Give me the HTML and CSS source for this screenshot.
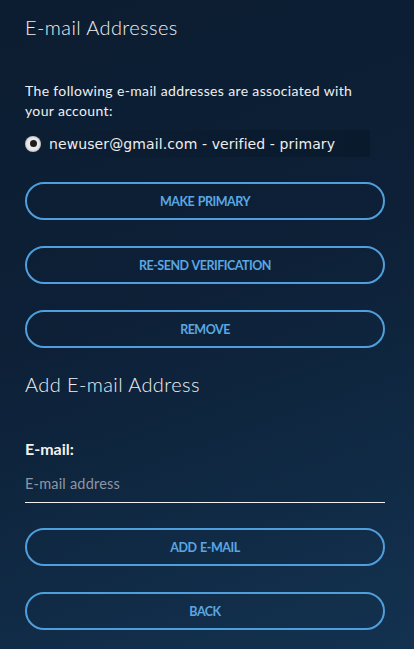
FILE: index.html
```html
<!DOCTYPE html>
<html>
<head>
<meta charset="utf-8">
<link rel="stylesheet" href="styles.css">
</head>
<body>
<main class="page">
  <h1 class="title">E-mail Addresses</h1>
  <p class="intro">The following e-mail addresses are associated with your account:</p>
  <label class="email-row">
    <span class="radio"><span class="radio-dot"></span></span>
    <span class="email-text">newuser@gmail.com - verified - primary</span>
  </label>
  <div class="actions">
    <button class="btn">Make Primary</button>
    <button class="btn">Re-send Verification</button>
    <button class="btn">Remove</button>
  </div>
  <h2 class="title title-add">Add E-mail Address</h2>
  <div class="field">
    <label class="field-label">E-mail:</label>
    <input class="field-input" type="email" placeholder="E-mail address">
  </div>
  <div class="actions actions-bottom">
    <button class="btn">Add E-mail</button>
    <button class="btn">Back</button>
  </div>
</main>
</body>
</html>
```
FILE: styles.css
```css
html, body {
  margin: 0;
  padding: 0;
  height: 100%;
}
body {
  background: linear-gradient(160deg, #0c1d31 0%, #0d2037 45%, #133250 100%);
  font-family: Lato, "Open Sans", sans-serif;
  color: #f0f0f0;
  overflow: hidden;
}
.page {
  width: 360px;
  padding: 0 25px;
  display: flex;
  flex-direction: column;
}
.title {
  margin: 13px 0 0;
  font-size: 20px;
  font-weight: 300;
  line-height: 28px;
  color: #eef0f2;
  letter-spacing: 0.4px;
}
.intro {
  margin: 40px 0 0;
  max-width: 340px;
  font-size: 14px;
  line-height: 20px;
  color: #eef0f2;
  letter-spacing: 0.35px;
}
.email-row {
  margin-top: 9px;
  display: flex;
  align-items: center;
  gap: 8px;
  height: 27px;
  width: 345px;
  background: linear-gradient(90deg, rgba(0,0,0,0) 0%, rgba(5,15,28,0.35) 100%);
}
.radio {
  width: 16px;
  height: 16px;
  border-radius: 50%;
  background: #e9e9e9;
  display: flex;
  align-items: center;
  justify-content: center;
  box-shadow: inset 0 0 2px rgba(0,0,0,0.5);
}
.radio-dot {
  width: 7px;
  height: 7px;
  border-radius: 50%;
  background: #1c1c1c;
}
.email-text {
  font-family: "DejaVu Sans", sans-serif;
  font-size: 14px;
  letter-spacing: 0.1px;
  color: #eeeeee;
}
.actions {
  margin-top: 25px;
  display: flex;
  flex-direction: column;
  gap: 26px;
}
.btn {
  height: 38px;
  border: 2px solid #4f9fdc;
  border-radius: 19px;
  background: transparent;
  color: #5ba7e2;
  font-family: Lato, "Open Sans", sans-serif;
  font-weight: 700;
  font-size: 12.5px;
  text-transform: uppercase;
  letter-spacing: -0.5px;
  word-spacing: 1px;
  padding: 0;
  cursor: pointer;
}
.title-add {
  margin-top: 22px;
}
.field {
  margin-top: 41px;
  display: flex;
  flex-direction: column;
}
.field-label {
  font-size: 16px;
  font-weight: 700;
  line-height: 20px;
  color: #f2f2f2;
}
.field-input {
  margin-top: 5px;
  height: 38px;
  border: none;
  border-bottom: 1px solid #f0f0f0;
  background: transparent;
  padding: 0;
  font-family: Lato, "Open Sans", sans-serif;
  font-size: 14.5px;
  letter-spacing: 0.2px;
  color: #f0f0f0;
  outline: none;
}
.field-input::placeholder {
  color: #8d97a3;
}
.actions-bottom {
  margin-top: 25px;
}
```
